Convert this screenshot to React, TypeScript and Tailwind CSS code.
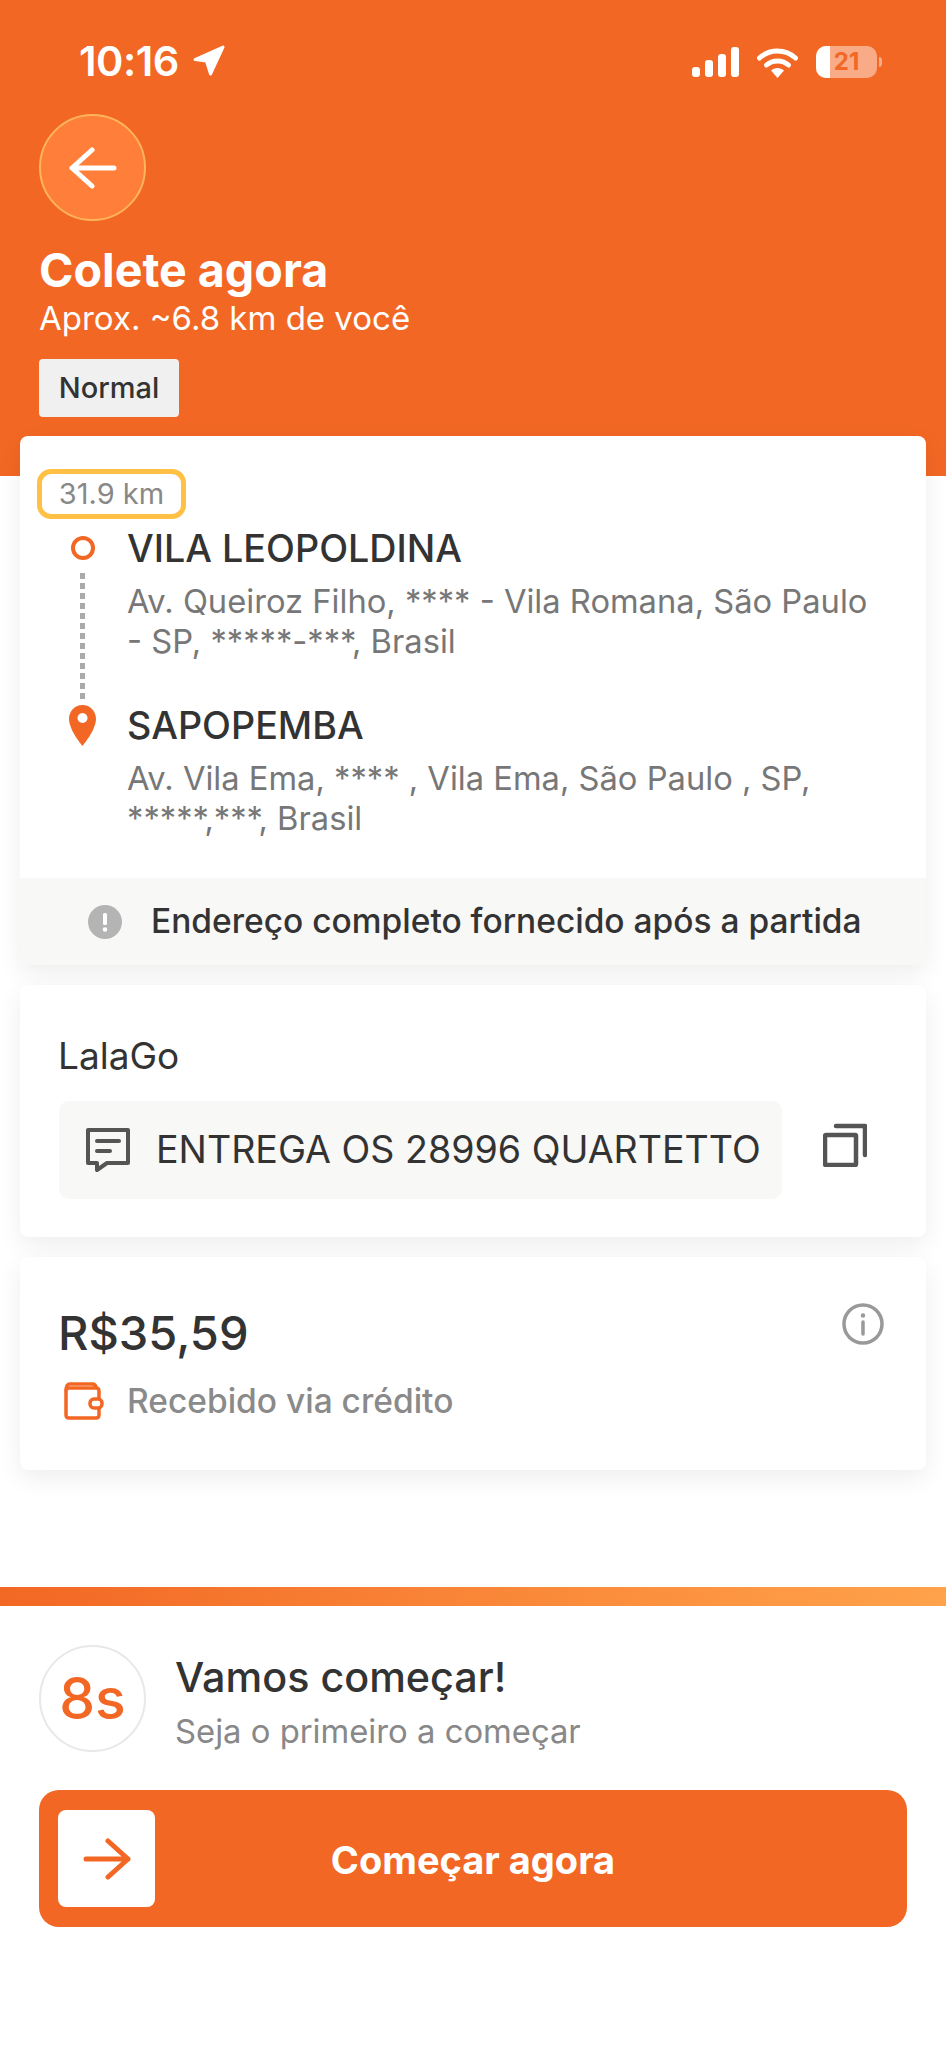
function Arrow({ left, color }: { left?: boolean; color: string }) {
  return (
    <svg width="48" height="42" viewBox="0 0 48 42" fill="none" stroke={color} strokeWidth="5" strokeLinecap="round" strokeLinejoin="round">
      {left ? <path d="M45 21 H3 M23 3 L3 21 L23 39" /> : <path d="M3 21 H45 M25 3 L45 21 L25 39" />}
    </svg>
  );
}

function StatusBar() {
  return (
    <div className="flex h-[60px] items-center justify-between pl-[79px] pr-[64px] pt-[4px]">
      <div className="flex items-center gap-[14px]">
        <span className="text-[41.5px] font-semibold leading-none tracking-[-0.5px]">10:16</span>
        <svg width="32" height="32" viewBox="0 0 32 32" className="mt-[-2px]">
          <path
            d="M2 14.5 L30 2 L17.5 29 L13.5 16 Z"
            fill="#fff"
            stroke="#fff"
            strokeWidth="3"
            strokeLinejoin="round"
          />
        </svg>
      </div>
      <div className="flex items-center">
        <svg width="47" height="30" viewBox="0 0 47 30" fill="#fff">
          <rect x="0" y="20" width="8" height="10" rx="3" />
          <rect x="13" y="13" width="8" height="17" rx="3" />
          <rect x="26" y="7" width="8" height="23" rx="3" />
          <rect x="39" y="0" width="8" height="30" rx="3" />
        </svg>
        <svg width="41" height="31" viewBox="0 0 41 31" fill="none" className="ml-[18px]">
          <path d="M2.5 11 C12.5 1.5 28.5 1.5 38.5 11" stroke="#fff" strokeWidth="5" strokeLinecap="round" />
          <path d="M9.5 18 C15.5 12.5 25.5 12.5 31.5 18" stroke="#fff" strokeWidth="5" strokeLinecap="round" />
          <path d="M14 23.5 C17.5 20 23.5 20 27 23.5 L20.5 31 Z" fill="#fff" />
        </svg>
        <div className="relative ml-[18px] h-[32px] w-[61px] overflow-hidden rounded-[10px] bg-white/45">
          <div className="absolute left-0 top-0 h-full w-[14px] bg-white" />
          <div className="absolute inset-0 flex items-center justify-center text-[24px] font-bold leading-none text-[#F26724]">
            21
          </div>
        </div>
        <div className="ml-[2px] h-[10px] w-[3px] rounded-r-full bg-white/45" />
      </div>
    </div>
  );
}

function Header() {
  return (
    <header className="h-[476px] bg-[#F26724] pt-[30px] text-white">
      <StatusBar />
      <div className="pl-[39px] pt-[24px]">
        <div className="flex h-[107px] w-[107px] items-center justify-center rounded-full border-2 border-[#FFB45C] bg-[#FF7F3A]">
          <Arrow left color="#fff" />
        </div>
        <h1 className="mt-[24px] text-[46.6px] font-bold leading-[50px]">Colete agora</h1>
        <p className="mt-[5px] text-[33px] leading-[37px]">Aprox. ~6.8 km de você</p>
        <div className="mt-[22px] flex h-[58px] w-[140px] items-center justify-center rounded-[4px] bg-[#F0F0F0] text-[29px] font-medium text-[#333]">
          Normal
        </div>
      </div>
    </header>
  );
}

function RouteCard() {
  return (
    <section className="overflow-hidden rounded-[8px] bg-white pt-[33px] shadow-[0_8px_24px_rgba(0,0,0,0.07)]">
      <div className="ml-[17px] flex h-[50px] w-[149px] items-center justify-center rounded-[14px] border-[5px] border-[#FFC045] text-[29px] text-[#888]">
        31.9 km
      </div>
      <div className="mt-[7px] flex pb-[40px]">
        <div className="ml-[36px] flex w-[53px] shrink-0 flex-col items-center pt-[10px]">
          <div className="h-[24px] w-[24px] rounded-full border-[4px] border-[#F26724]" />
          <div className="mt-[13px] h-[128px] w-[5px] bg-[repeating-linear-gradient(to_bottom,#aaa_0,#aaa_6px,#fff_6px,#fff_10px)]" />
          <svg width="27" height="41" viewBox="0 0 27 41" className="mt-[4px]">
            <path
              fillRule="evenodd"
              d="M13.5 0 C6 0 0 6 0 14 C0 25 13.5 41 13.5 41 S27 25 27 14 C27 6 21 0 13.5 0 Z M13.5 8 a5 5 0 1 0 0.01 0 Z"
              fill="#F26724"
            />
          </svg>
        </div>
        <div className="ml-[18px] pr-[50px]">
          <div className="text-[37.7px] font-medium leading-[44px] text-[#333]">VILA LEOPOLDINA</div>
          <p className="mt-[11px] text-[32.7px] leading-[40px] text-[#777]">
            Av. Queiroz Filho, **** - Vila Romana, São Paulo - SP, *****-***, Brasil
          </p>
          <div className="mt-[42px] text-[37.7px] font-medium leading-[44px] text-[#333]">SAPOPEMBA</div>
          <p className="mt-[11px] text-[32.7px] leading-[40px] text-[#777]">
            Av. Vila Ema, **** , Vila Ema, São Paulo , SP, *****,***, Brasil
          </p>
        </div>
      </div>
      <div className="flex h-[87px] items-center bg-[#F8F8F7] pl-[68px]">
        <svg width="34" height="34" viewBox="0 0 34 34">
          <circle cx="17" cy="17" r="17" fill="#B4B4B4" />
          <rect x="15" y="8" width="4" height="12" rx="1.5" fill="#fff" />
          <circle cx="17" cy="24.5" r="2.3" fill="#fff" />
        </svg>
        <span className="ml-[29px] text-[33.5px] font-medium text-[#333]">
          Endereço completo fornecido após a partida
        </span>
      </div>
    </section>
  );
}

function MessageCard() {
  return (
    <section className="h-[252px] rounded-[8px] bg-white pl-[39px] pt-[49px] shadow-[0_8px_24px_rgba(0,0,0,0.07)]">
      <div className="ml-[-1px] text-[37px] leading-[44px] text-[#333]">LalaGo</div>
      <div className="mt-[23px] flex items-center">
        <div className="flex h-[98px] w-[723px] items-center rounded-[10px] bg-[#F8F8F6] pl-[27px]">
          <svg width="44" height="45" viewBox="0 0 44 45" fill="none" stroke="#555" strokeWidth="4">
            <path d="M2 2 H42 V35 H21 L11 42 V35 H2 Z" strokeLinejoin="round" />
            <path d="M11 13 H33 M11 23 H24" strokeLinecap="round" />
          </svg>
          <span className="ml-[26px] whitespace-nowrap text-[37.6px] text-[#333]">ENTREGA OS 28996 QUARTETTO</span>
        </div>
        <svg width="44" height="44" viewBox="0 0 44 44" fill="none" stroke="#555" strokeWidth="4.5" className="ml-[41px] mt-[-10px]">
          <rect x="2" y="12" width="31" height="30" rx="1" />
          <path d="M13 3 H42 V32" strokeLinecap="round" strokeLinejoin="round" />
        </svg>
      </div>
    </section>
  );
}

function PriceCard() {
  return (
    <section className="flex h-[213px] justify-between rounded-[8px] bg-white pl-[40px] pr-[42px] pt-[47px] shadow-[0_8px_24px_rgba(0,0,0,0.07)]">
      <div>
        <div className="ml-[-2px] text-[47px] font-medium leading-[58px] text-[#333]">R$35,59</div>
        <div className="mt-[14px] flex items-center">
          <svg width="40" height="38" viewBox="0 0 40 38" fill="none" stroke="#F26724" strokeWidth="3.5" className="ml-[4px]">
            <path d="M2 9 V33 C2 35 3 36 5 36 H32 C34 36 35 35 35 33 V9 C35 7 34 6 32 6 H5 C3 6 2 7 2 9 Z" />
            <path d="M2 9 C2 4 3 2 6 2 H28 C31 2 32 4 32 6" />
            <rect x="26" y="17" width="12" height="9" rx="4" fill="#fff" />
          </svg>
          <span className="ml-[23px] text-[33.5px] font-medium text-[#8A8A8A]">Recebido via crédito</span>
        </div>
      </div>
      <svg width="42" height="42" viewBox="0 0 42 42" fill="none" className="mt-[-1px]">
        <circle cx="21" cy="21" r="19" stroke="#999" strokeWidth="3.5" />
        <circle cx="21" cy="12.5" r="2.2" fill="#999" />
        <path d="M21 19 V31" stroke="#999" strokeWidth="3.5" strokeLinecap="round" />
      </svg>
    </section>
  );
}

function Footer() {
  return (
    <footer className="mt-[117px]">
      <div className="h-[19px] bg-gradient-to-r from-[#F26724] to-[#FFA24A]" />
      <div className="px-[39px] pt-[39px]">
        <div className="flex items-center">
          <div className="flex h-[107px] w-[107px] items-center justify-center rounded-full border-2 border-[#E8E8E8] text-[57px] font-medium text-[#F26724]">
            8s
          </div>
          <div className="ml-[29px] mt-[7px]">
            <div className="text-[41.3px] font-medium leading-[46px] text-[#333]">Vamos começar!</div>
            <div className="mt-[11px] text-[32.8px] leading-[40px] text-[#888]">Seja o primeiro a começar</div>
          </div>
        </div>
        <div className="relative mt-[38px] flex h-[137px] items-center justify-center rounded-[20px] bg-[#F26724] pt-[3px]">
          <div className="absolute left-[19px] top-[20px] flex h-[97px] w-[97px] items-center justify-center rounded-[8px] bg-white">
            <Arrow color="#F26724" />
          </div>
          <span className="text-[38px] font-bold text-white">Começar agora</span>
        </div>
      </div>
    </footer>
  );
}

export default function App() {
  return (
    <div className="min-h-[2048px] bg-white font-['Inter',sans-serif]">
      <Header />
      <main className="mx-[20px] mt-[-40px] flex flex-col gap-[20px]">
        <RouteCard />
        <MessageCard />
        <PriceCard />
      </main>
      <Footer />
    </div>
  );
}
